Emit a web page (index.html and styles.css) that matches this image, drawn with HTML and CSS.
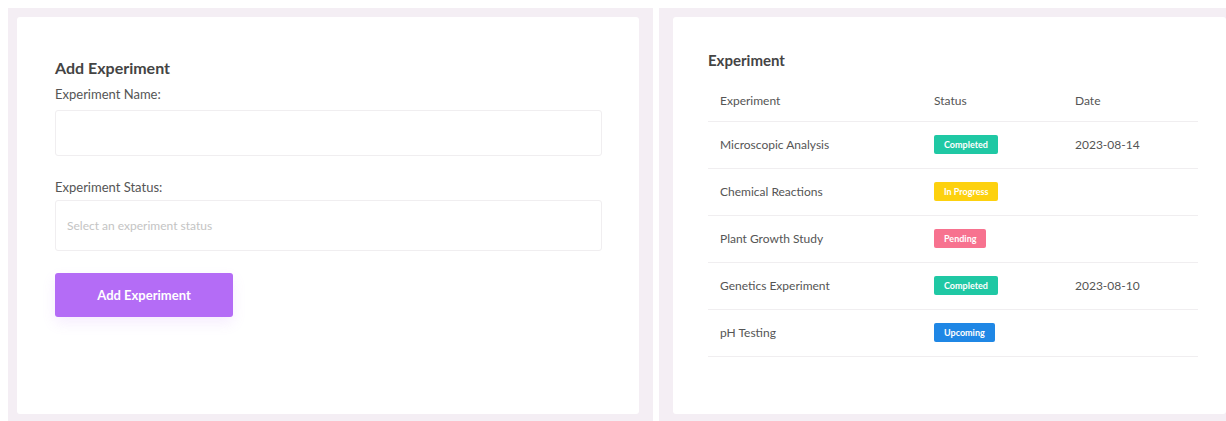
FILE: index.html
```html
<!DOCTYPE html>
<html lang="en">
<head>
<meta charset="utf-8">
<title>Experiments</title>
<link rel="stylesheet" href="styles.css">
</head>
<body>
<div class="page">
  <section class="col col-left">
    <div class="card form-card">
      <h2 class="card-title">Add Experiment</h2>
      <label class="field-label" for="exp-name">Experiment Name:</label>
      <input id="exp-name" class="field-input" type="text">
      <label class="field-label label-status" for="exp-status">Experiment Status:</label>
      <div id="exp-status" class="field-select">Select an experiment status</div>
      <button class="btn-primary" type="button">Add Experiment</button>
    </div>
  </section>
  <section class="col col-right">
    <div class="card table-card">
      <h2 class="card-title table-title">Experiment</h2>
      <table class="exp-table">
        <thead>
          <tr><th>Experiment</th><th>Status</th><th>Date</th></tr>
        </thead>
        <tbody>
          <tr><td>Microscopic Analysis</td><td><span class="badge badge-done">Completed</span></td><td>2023-08-14</td></tr>
          <tr><td>Chemical Reactions</td><td><span class="badge badge-progress">In Progress</span></td><td></td></tr>
          <tr><td>Plant Growth Study</td><td><span class="badge badge-pending">Pending</span></td><td></td></tr>
          <tr><td>Genetics Experiment</td><td><span class="badge badge-done">Completed</span></td><td>2023-08-10</td></tr>
          <tr><td>pH Testing</td><td><span class="badge badge-upcoming">Upcoming</span></td><td></td></tr>
        </tbody>
      </table>
    </div>
  </section>
</div>
</body>
</html>
```

FILE: styles.css
```css
* {
  box-sizing: border-box;
}

html, body {
  margin: 0;
  padding: 0;
  background: #ffffff;
  overflow: hidden;
}

body {
  font-family: Lato, "Noto Sans", sans-serif;
  color: #555;
}

.page {
  display: grid;
  grid-template-columns: 645px 567px;
  gap: 6px;
  padding: 8px 0 0 8px;
  height: 421px;
}

.col {
  background: #f4eef4;
  display: flex;
}

.col-left {
  padding: 9px 14px 7px 9px;
}

.col-right {
  padding: 9px 0 7px 14px;
}

.card {
  background: #fff;
  border-radius: 3px;
  flex: 1;
}

.card-title {
  margin: 0;
  font-size: 16px;
  line-height: 22px;
  font-weight: 700;
  color: #444;
}

/* form side */
.form-card {
  padding: 40px 37px 0 38px;
  display: flex;
  flex-direction: column;
  align-items: flex-start;
}

.field-label {
  display: block;
  margin-top: 6px;
  font-size: 13px;
  line-height: 18px;
  color: #555;
}

.label-status {
  margin-top: 22px;
}

.field-input,
.field-select {
  display: block;
  width: 547px;
  margin-top: 7px;
  border: 1px solid #f0eef0;
  border-radius: 3px;
  background: #fff;
  font: inherit;
}

.field-input {
  height: 46px;
}

.field-select {
  height: 51px;
  margin-top: 4px;
  padding: 0 11px;
  display: flex;
  align-items: center;
  font-size: 12px;
  color: #c4c4c4;
}

.btn-primary {
  margin-top: 22px;
  width: 178px;
  height: 44px;
  border: none;
  border-radius: 3px;
  background: #b46cf6;
  color: #fff;
  font-family: inherit;
  font-size: 13px;
  font-weight: 700;
  box-shadow: 0 6px 14px rgba(180, 108, 246, 0.12);
}

/* table side */
.table-card {
  padding: 33px 0 0 35px;
}

.table-title {
  font-size: 15px;
  line-height: 20px;
}

.exp-table {
  margin-top: 11px;
  width: 490px;
  border-collapse: collapse;
  font-size: 12px;
  color: #555;
}

.exp-table th {
  text-align: left;
  font-weight: 400;
  height: 40px;
  padding: 0 12px;
  border-bottom: 1px solid #f0eef0;
}

.exp-table td {
  height: 47px;
  padding: 0 12px;
  border-bottom: 1px solid #f0eef0;
}

.exp-table th:nth-child(1),
.exp-table td:nth-child(1) {
  width: 214px;
}

.exp-table th:nth-child(2),
.exp-table td:nth-child(2) {
  width: 141px;
}

.badge {
  display: inline-block;
  padding: 0 10px;
  height: 19px;
  line-height: 19px;
  border-radius: 2px;
  font-size: 9px;
  font-weight: 700;
  color: #fff;
}

.badge-done { background: #1fc8a4; }
.badge-progress { background: #fdd10e; }
.badge-pending { background: #f7728f; }
.badge-upcoming { background: #1f87e5; }
```
